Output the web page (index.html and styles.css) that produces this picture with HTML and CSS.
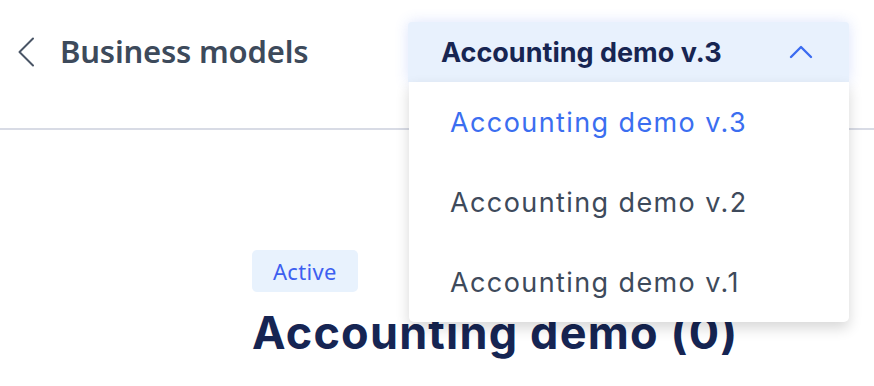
FILE: index.html
```html
<!DOCTYPE html>
<html lang="en">
<head>
  <meta charset="UTF-8">
  <meta name="viewport" content="width=device-width, initial-scale=1.0">
  <title>Business models</title>
  <link rel="stylesheet" href="styles.css">
</head>
<body>
  <header class="topbar">
    <a class="back" href="#">
      <svg width="18" height="30" viewBox="0 0 18 30" fill="none">
        <path d="M16 1.5 L2.5 15 L16 28.5" stroke="#4a5566" stroke-width="2" stroke-linecap="round" stroke-linejoin="round"/>
      </svg>
    </a>
    <h1 class="page-title">Business models</h1>

    <div class="select">
      <button class="select-btn">
        <span>Accounting demo v.3</span>
        <svg width="24" height="14" viewBox="0 0 24 14" fill="none">
          <path d="M2 12 L12 2 L22 12" stroke="#3b6cf0" stroke-width="2.4" stroke-linecap="round" stroke-linejoin="round"/>
        </svg>
      </button>
      <ul class="select-menu">
        <li class="selected">Accounting demo v.3</li>
        <li>Accounting demo v.2</li>
        <li>Accounting demo v.1</li>
      </ul>
    </div>
  </header>

  <main class="content">
    <span class="badge">Active</span>
    <h2 class="model-name">Accounting demo (0)</h2>
  </main>
</body>
</html>
```

FILE: styles.css
```css
body {
  margin: 0;
  background: #fff;
  font-family: Inter, "Noto Sans", sans-serif;
  overflow: hidden;
}
.topbar {
  display: flex;
  align-items: flex-start;
  height: 128px;
  border-bottom: 2px solid #d8dbe5;
  position: relative;
}
.back {
  display: flex;
  margin: 37px 0 0 17px;
}
.page-title {
  margin: 30px 0 0 25px;
  font-family: "Noto Sans", sans-serif;
  font-size: 31px;
  font-weight: 600;
  color: #3d4a5b;
  letter-spacing: -0.2px;
}
.select {
  margin: 22px 25px 0 auto;
  width: 441px;
  position: relative;
}
.select-btn {
  display: flex;
  align-items: center;
  justify-content: space-between;
  width: 100%;
  height: 60px;
  padding: 0 36px 0 33px;
  border: none;
  border-radius: 4px 4px 0 0;
  background: #e8f1fd;
  box-shadow: 0 0 14px rgba(59, 108, 240, 0.18);
  font-family: Inter, sans-serif;
  font-size: 27px;
  font-weight: 700;
  color: #172552;
}
.select-menu {
  position: absolute;
  top: 60px;
  left: 1px;
  right: 0;
  margin: 0;
  padding: 0;
  list-style: none;
  background: #fff;
  border-radius: 0 0 5px 5px;
  box-shadow: 0 6px 14px rgba(0, 0, 0, 0.16);
  z-index: 2;
}
.select-menu li {
  height: 80px;
  display: flex;
  align-items: center;
  padding-left: 41px;
  font-size: 27px;
  letter-spacing: 1.4px;
  color: #3e4a5b;
}
.select-menu li.selected {
  color: #3b6ef0;
}
.content {
  padding: 120px 0 0 252px;
}
.badge {
  display: inline-block;
  padding: 8px 21px;
  background: #e8f2fd;
  border-radius: 5px;
  font-family: "Noto Sans", sans-serif;
  font-size: 22px;
  line-height: 26px;
  letter-spacing: 0.3px;
  color: #3d5ff0;
}
.model-name {
  margin: 13px 0 0;
  font-size: 45px;
  font-weight: 700;
  color: #162553;
  letter-spacing: 1.2px;
}
```
